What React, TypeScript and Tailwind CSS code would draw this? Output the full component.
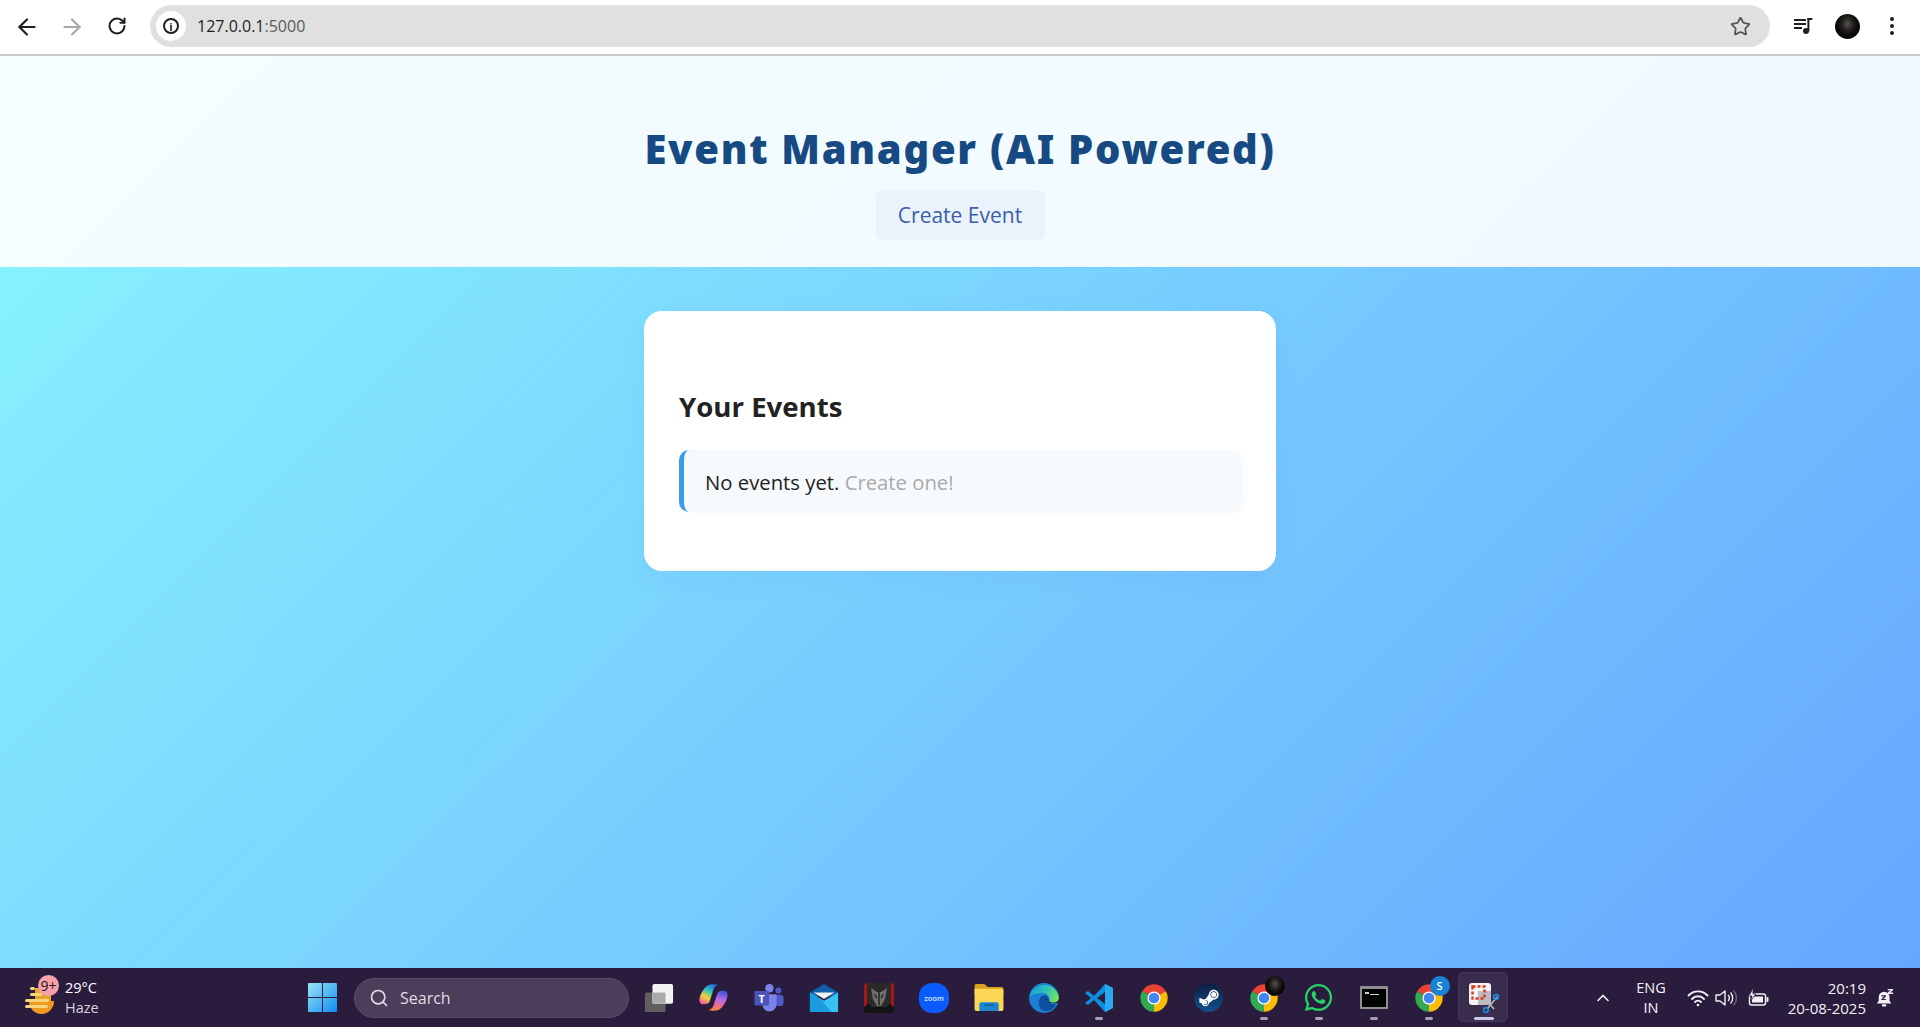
import React from 'react';
import { ArrowLeft, ArrowRight, RotateCw, Star, ChevronUp, Search } from 'lucide-react';
import { FaWhatsapp, FaSteamSymbol } from 'react-icons/fa';

const ChromeIcon: React.FC = () => (
  <svg viewBox="0 0 48 48" className="w-[30px] h-[30px]">
    <path d="M24 24 L5 13 A22 22 0 0 1 43 13 Z" fill="#ea4335" />
    <path d="M24 24 L43 13 A22 22 0 0 1 24 46 Z" fill="#fbbc04" />
    <path d="M24 24 L24 46 A22 22 0 0 1 5 13 Z" fill="#34a853" />
    <circle cx="24" cy="24" r="10.5" fill="#fff" />
    <circle cx="24" cy="24" r="8.5" fill="#4285f4" />
  </svg>
);

const TaskView = () => (
  <svg viewBox="0 0 32 32" className="w-[30px] h-[30px]">
    <rect x="1" y="10" width="22" height="21" rx="2" fill="#5f5f5f" />
    <rect x="9" y="1" width="22" height="21" rx="2" fill="#f2f2f2" />
    <rect x="9" y="10" width="14" height="12" rx="1" fill="#ababab" />
  </svg>
);

const Copilot = () => (
  <svg viewBox="0 0 30 28" className="w-[29px] h-[27px]">
    <defs>
      <linearGradient id="cpA" x1="0.7" y1="0" x2="0.2" y2="1">
        <stop offset="0" stopColor="#1f6fe0" />
        <stop offset="0.35" stopColor="#2fc4b8" />
        <stop offset="0.65" stopColor="#f3d23a" />
        <stop offset="1" stopColor="#ef5aa0" />
      </linearGradient>
      <linearGradient id="cpB" x1="0.6" y1="0" x2="0.4" y2="1">
        <stop offset="0" stopColor="#3f50d8" />
        <stop offset="0.4" stopColor="#b46be8" />
        <stop offset="0.75" stopColor="#f06a8c" />
        <stop offset="1" stopColor="#f58a2e" />
      </linearGradient>
    </defs>
    <path d="M9 1.5 C11 0 17 0 20 1 C16 2 15 5 14 9 L11 18 C10 21 7 21 4 21 C1 21 0 18 0.5 15 C1.5 10 5 4 9 1.5Z" fill="url(#cpA)" />
    <path d="M21 26.5 C19 28 13 28 10 27 C14 26 15 23 16 19 L19 10 C20 7 23 7 26 7 C29 7 30 10 29.5 13 C28.5 18 25 24 21 26.5Z" fill="url(#cpB)" />
  </svg>
);

const Teams = () => (
  <svg viewBox="0 0 32 32" className="w-[30px] h-[30px]">
    <circle cx="26" cy="8" r="3.2" fill="#5059c9" />
    <rect x="22" y="12.5" width="9.5" height="12" rx="3.5" fill="#5059c9" />
    <circle cx="16.5" cy="5.5" r="4.5" fill="#7b83eb" />
    <path d="M9 12 H24 V23 A7.5 7.5 0 0 1 9 23 Z" fill="#7b83eb" />
    <rect x="0.5" y="8.5" width="15.5" height="15.5" rx="1.5" fill="#4b53bc" />
    <text x="8.2" y="21" textAnchor="middle" fontSize="11.5" fontWeight="700" fontFamily="'Open Sans',sans-serif" fill="#fff">T</text>
  </svg>
);

const Mail = () => (
  <svg viewBox="0 0 32 32" className="w-[30px] h-[30px]">
    <path d="M1 10 L16 1 L31 10 V14 H1Z" fill="#0f5fa8" />
    <path d="M5 10 H27 L16 17Z" fill="#f1f1f1" />
    <path d="M1 10 L16 19 L31 10 V31 H1Z" fill="#36c2f3" />
    <path d="M1 10 L13 18 L24 31 H1Z" fill="#1a9be0" />
  </svg>
);

const Predator = () => (
  <svg viewBox="0 0 30 30" className="w-[30px] h-[30px]">
    <rect width="30" height="30" rx="3" fill="#141414" />
    <path d="M0 3 A3 3 0 0 1 3 0 V22 L0 24Z M30 3 A3 3 0 0 0 27 0 V22 L30 24Z" fill="#a81616" />
    <path d="M3 0 H27 V20 L22 24 H8 L3 20Z" fill="#2a2a2a" />
    <path d="M7 5 L13 9 H17 L23 5 L21 16 L17 23 H13 L9 16Z" fill="#6f6f6f" />
    <path d="M14 9 H16 V22 H14Z M10 10 L13 13 V16 L11 14Z M20 10 L17 13 V16 L19 14Z" fill="#343434" />
  </svg>
);

const ZoomIcon = () => (
  <svg viewBox="0 0 30 30" className="w-[30px] h-[30px]">
    <rect width="30" height="30" rx="13" fill="#0b5cff" />
    <text x="15" y="17.6" textAnchor="middle" fontSize="7.4" fontWeight="600" fontFamily="'Open Sans',sans-serif" fill="#dfe9ff">zoom</text>
  </svg>
);

const Folder = () => (
  <svg viewBox="0 0 30 28" className="w-[30px] h-[27px]">
    <path d="M0 2 A2 2 0 0 1 2 0 H10 L14 3 H28 A2 2 0 0 1 30 5 V10 H0Z" fill="#d9a21b" />
    <path d="M0 5 H28 A2 2 0 0 1 30 7 V26 A2 2 0 0 1 28 28 H2 A2 2 0 0 1 0 26Z" fill="#fcd757" />
    <path d="M5 28 V21 A2 2 0 0 1 7 19 H23 A2 2 0 0 1 25 21 V28Z" fill="#1a86d0" />
    <rect x="10" y="21" width="10" height="1.6" fill="#0e5f9c" />
  </svg>
);

const Edge = () => (
  <svg viewBox="0 0 30 30" className="w-[30px] h-[30px]">
    <defs>
      <linearGradient id="edgeA" x1="0" y1="0.3" x2="1" y2="0.6">
        <stop offset="0" stopColor="#1a9fdc" />
        <stop offset="0.55" stopColor="#2fc7b0" />
        <stop offset="1" stopColor="#7be35c" />
      </linearGradient>
    </defs>
    <circle cx="15" cy="15" r="15" fill="#1b7fd4" />
    <path d="M0.6 13 A15 15 0 0 1 30 15 C30 20 25 21 20 20 C23 14 17 9 11 10 C6 11 2 12 0.6 13Z" fill="url(#edgeA)" />
    <path d="M10 19 C10 14 15 11 18 13 C20 15 20 18 20 20 L27 21 C24 28 16 30 12 26 C10 24 10 21 10 19Z" fill="#0d4f9c" />
    <path d="M15 17 C17 15 19 17 20 20 L30 20 L30 15 C29 20 25 20 21 19 C19 18 17 16 15 17Z" fill="#2a1c3c" />
  </svg>
);

const VsCode = () => (
  <svg viewBox="0 0 30 30" className="w-[30px] h-[30px]">
    <path d="M21 1 L10 13 L4 8 L1 10 L7 15 L1 20 L4 22 L10 17 L21 29 L29 25 V5Z M21 9 V21 L13 15Z" fill="#0f8fe0" />
    <path d="M21 1 L29 5 V25 L21 29Z" fill="#2aa8f2" />
  </svg>
);

const Steam = () => (
  <div className="w-[29px] h-[29px] rounded-full bg-[linear-gradient(180deg,#0d1d3f,#10508f)] flex items-center justify-center">
    <FaSteamSymbol className="text-white w-[22px] h-[22px]" />
  </div>
);

const Terminal = () => (
  <div className="w-[28px] h-[23px] bg-black border-2 border-[#8f8f8f] border-t-[3px] rounded-[1px] relative">
    <span className="absolute left-[3px] top-[3px] w-[4px] h-[2px] bg-[#cfcfcf]" />
    <span className="absolute left-[8px] top-[5px] w-[9px] h-[1px] bg-[#cfcfcf]" />
  </div>
);

const Snip = () => (
  <svg viewBox="0 0 32 32" className="w-[32px] h-[32px]">
    <rect x="1" y="1" width="22" height="22" rx="3" fill="#f4f4f4" />
    <rect x="10" y="9" width="13" height="14" fill="#bcbcc4" />
    <rect x="4.5" y="4.5" width="12" height="12" fill="none" stroke="#d8371f" strokeWidth="2.4" strokeDasharray="3 2" />
    <path d="M16 16 L26 27 M29 15 L19 27" stroke="#b9b9b9" strokeWidth="1.6" />
    <circle cx="28" cy="15" r="2.4" fill="none" stroke="#1b8be0" strokeWidth="1.6" />
    <circle cx="18" cy="28" r="2.4" fill="none" stroke="#1b8be0" strokeWidth="1.6" />
  </svg>
);

const Slot: React.FC<{ dot?: boolean; active?: boolean; children: React.ReactNode }> = ({ dot, active, children }) => (
  <div className="relative w-[55px] h-full flex items-center justify-center">
    {active && <span className="absolute left-[2px] right-[3px] top-[4px] bottom-[5px] rounded-[5px] bg-[#3a2c4d] border border-[#43365a]" />}
    <span className="relative flex items-center justify-center">{children}</span>
    {dot && <span className="absolute top-[49px] left-1/2 -translate-x-1/2 w-[8px] h-[3px] rounded-full bg-[#a79fb0]" />}
    {active && <span className="absolute top-[49px] left-1/2 -translate-x-1/2 w-[20px] h-[3px] rounded-full bg-[#c9c6ee]" />}
  </div>
);

const Avatar: React.FC<{ size: string }> = ({ size }) => (
  <div className={`${size} rounded-full bg-[radial-gradient(ellipse_at_50%_40%,#5a5450_0%,#2a2826_26%,#0a0a0a_55%,#040404_100%)]`} />
);

export default function App() {
  return (
    <div className="h-screen flex flex-col overflow-hidden font-['Open_Sans',sans-serif]">
      {/* browser toolbar */}
      <div className="h-[56px] shrink-0 bg-white border-b-2 border-[#c8c8c8] flex items-start">
        <div className="w-[150px] h-[54px] flex items-center pl-[14px] gap-[19px]">
          <ArrowLeft className="w-[26px] h-[26px] text-[#1f1f1f]" strokeWidth={2} />
          <ArrowRight className="w-[26px] h-[26px] text-[#a8a8a8]" strokeWidth={2} />
          <RotateCw className="w-[20px] h-[20px] text-[#1f1f1f] ml-[3px] -mt-[3px]" strokeWidth={2.4} />
        </div>
        <div className="mt-[5px] w-[1620px] h-[42px] rounded-full bg-[#e0e0e0] flex items-center pl-[6px] pr-[14px]">
          <div className="w-[30px] h-[30px] rounded-full bg-white flex items-center justify-center">
            <div className="w-[16px] h-[16px] rounded-full border-2 border-[#1f1f1f] flex items-center justify-center text-[11px] font-bold leading-none text-[#1f1f1f]">i</div>
          </div>
          <span className="ml-[11px] text-[16px] text-[#1f1f1f]">127.0.0.1<span className="text-[#5b5b5b]">:5000</span></span>
          <Star className="ml-auto mr-[5px] w-[21px] h-[21px] text-[#555]" strokeWidth={2} />
        </div>
        <div className="flex-1 h-[52px] flex items-center pl-[24px]">
          <svg viewBox="0 0 20 18" className="w-[20px] h-[18px]" fill="#1f1f1f">
            <rect x="0" y="2" width="12" height="2" />
            <rect x="0" y="6" width="12" height="2" />
            <rect x="0" y="10" width="8" height="2" />
            <circle cx="12" cy="14" r="3" />
            <rect x="13.4" y="1" width="2" height="13" />
            <rect x="13.4" y="1" width="5" height="2" />
          </svg>
          <div className="ml-[21px]"><Avatar size="w-[25px] h-[25px]" /></div>
          <div className="ml-[30px] flex flex-col gap-[3px]">
            <span className="w-[4px] h-[4px] rounded-full bg-[#1f1f1f]" />
            <span className="w-[4px] h-[4px] rounded-full bg-[#1f1f1f]" />
            <span className="w-[4px] h-[4px] rounded-full bg-[#1f1f1f]" />
          </div>
        </div>
      </div>

      {/* page */}
      <div className="flex-1 min-h-0 bg-[linear-gradient(135deg,#89f7fe_0%,#66a6ff_100%)]">
        <header className="h-[211px] bg-white/90 flex flex-col items-center pt-[64px]">
          <h1 className="text-[40px] leading-[58px] font-black tracking-[1.7px] text-[#174a82] font-['Noto_Sans',sans-serif]">Event Manager (AI Powered)</h1>
          <a className="mt-[12px] w-[169px] h-[50px] rounded-[6px] bg-[#eaf3fb] flex items-center justify-center pt-[1px] text-[21px] text-[#3b5fa8]">Create Event</a>
        </header>
        <main className="mt-[44px] mx-auto w-[632px] h-[260px] rounded-[18px] bg-white shadow-[0_8px_32px_rgba(31,38,135,0.03)] pl-[35px] pr-[33px] pt-[77px]">
          <h2 className="text-[27.6px] leading-[36px] font-bold text-[#222]">Your Events</h2>
          <div className="mt-[26px] h-[62px] rounded-[10px] border-l-[5px] border-[#3b9bea] bg-[#f7fafd] shadow-[0_2px_8px_rgba(0,0,0,0.02)] flex items-center pl-[21px] pt-[2px] text-[20.3px] text-[#222]">
            <span>No events yet. <span className="text-[#aaa]">Create one!</span></span>
          </div>
        </main>
      </div>

      {/* windows taskbar */}
      <div className="h-[59px] shrink-0 bg-[#2a1c3c] flex items-center text-white">
        <div className="w-[308px] flex items-center h-full pl-[25px] relative">
          <svg viewBox="0 0 30 32" className="w-[30px] h-[32px] mt-[6px]">
            <path d="M4 16 H29 A12.5 13 0 0 1 4 16Z" fill="#f29a1f" />
            <rect x="10" y="3" width="16" height="13" fill="#e8a52e" />
            <rect x="5" y="2" width="5" height="3" rx="1.5" fill="#f5d67a" />
            <rect x="5" y="8" width="12" height="3" rx="1.5" fill="#f5d67a" />
            <rect x="0" y="14" width="24" height="3" rx="1.5" fill="#f5d67a" />
            <rect x="0" y="20" width="23" height="3" rx="1.5" fill="#f5d67a" />
          </svg>
          <span className="absolute left-[38px] top-[7px] w-[21px] h-[21px] rounded-full bg-[#f8a0aa] text-[#1a1a1a] text-[14px] leading-[21px] text-center">9+</span>
          <div className="ml-[10px] text-[14.5px] leading-[20px]">
            <div>29°C</div>
            <div className="text-[#d8d3de]">Haze</div>
          </div>
        </div>
        <svg viewBox="0 0 29 29" className="w-[29px] h-[29px] shrink-0">
          <defs>
            <linearGradient id="winA" x1="0" y1="0" x2="1" y2="1">
              <stop offset="0" stopColor="#9be4f5" />
              <stop offset="1" stopColor="#0a8df0" />
            </linearGradient>
          </defs>
          <path d="M1 0 H14 V14 H0 V1 A1 1 0 0 1 1 0Z M15 0 H28 A1 1 0 0 1 29 1 V14 H15Z M0 15 H14 V29 H1 A1 1 0 0 1 0 28Z M15 15 H29 V28 A1 1 0 0 1 28 29 H15Z" fill="url(#winA)" />
        </svg>
        <div className="ml-[17px] w-[275px] h-[40px] shrink-0 rounded-full bg-[#4c3e5a] border border-[#5b4d68] flex items-center pl-[14px] text-[#e0dce4]">
          <Search className="w-[20px] h-[20px]" strokeWidth={2} />
          <span className="ml-[11px] text-[16px]">Search</span>
        </div>
        <div className="ml-[2px] flex items-center h-full">
          <Slot><TaskView /></Slot>
          <Slot><Copilot /></Slot>
          <Slot><Teams /></Slot>
          <Slot><Mail /></Slot>
          <Slot><Predator /></Slot>
          <Slot><ZoomIcon /></Slot>
          <Slot><Folder /></Slot>
          <Slot><Edge /></Slot>
          <Slot dot><VsCode /></Slot>
          <Slot><ChromeIcon /></Slot>
          <Slot><Steam /></Slot>
          <Slot dot>
            <ChromeIcon />
            <span className="absolute -right-[6px] -top-[7px]"><Avatar size="w-[20px] h-[20px]" /></span>
          </Slot>
          <Slot dot><FaWhatsapp className="w-[31px] h-[31px] text-[#25d366]" /></Slot>
          <Slot dot><Terminal /></Slot>
          <Slot dot>
            <ChromeIcon />
            <span className="absolute -right-[6px] -top-[7px] w-[20px] h-[20px] rounded-full bg-[#1783d4] text-[11px] leading-[20px] text-center font-semibold">S</span>
          </Slot>
          <Slot active><Snip /></Slot>
        </div>
        <div className="flex-1 h-full flex items-center pl-[82px] text-[#f3f0f6]">
          <ChevronUp className="w-[20px] h-[20px]" strokeWidth={2} />
          <div className="ml-[18px] w-[40px] text-center text-[14.5px] leading-[20px]">
            <div>ENG</div>
            <div>IN</div>
          </div>
          <svg viewBox="0 0 22 18" className="ml-[16px] w-[22px] h-[18px]" fill="none" stroke="#f3f0f6" strokeWidth="1.9" strokeLinecap="round">
            <path d="M1.5 6.5 A13 13 0 0 1 20.5 6.5" />
            <path d="M5 10 A8 8 0 0 1 17 10" />
            <path d="M8 13 A4 4 0 0 1 14 13" />
            <circle cx="11" cy="16" r="1.3" fill="#f3f0f6" stroke="none" />
          </svg>
          <svg viewBox="0 0 22 20" className="ml-[6px] w-[22px] h-[20px]" fill="none" stroke="#f3f0f6" strokeWidth="1.4">
            <path d="M1 7 H5 L10 3 V17 L5 13 H1Z" strokeLinejoin="round" />
            <path d="M13 7 A4 4 0 0 1 13 13" />
            <path d="M15.5 4.5 A8 8 0 0 1 15.5 15.5" />
            <path d="M18.5 2.5 A11 11 0 0 1 18.5 17.5" stroke="#6a5f76" />
          </svg>
          <svg viewBox="0 0 22 20" className="ml-[10px] w-[22px] h-[20px]">
            <rect x="2.5" y="6" width="16" height="11" rx="2" fill="none" stroke="#f3f0f6" strokeWidth="1.5" />
            <rect x="5" y="8.5" width="11" height="6" fill="#f3f0f6" />
            <rect x="19.5" y="9" width="2" height="5" rx="1" fill="#f3f0f6" />
            <path d="M6 0 L2 8 H5 L3.5 13 L9 6 H6Z" fill="#f3f0f6" stroke="#2a1c3c" strokeWidth="0.8" />
          </svg>
          <div className="ml-[9px] w-[88px] text-right text-[15px] leading-[20px] whitespace-nowrap">
            <div>20:19</div>
            <div>20-08-2025</div>
          </div>
          <svg viewBox="0 0 20 22" className="ml-[10px] w-[18px] h-[20px]" fill="#f3f0f6">
            <path d="M9 4 A6 6 0 0 1 15 10 V14 L17 17 H1 L3 14 V10 A6 6 0 0 1 9 4Z" />
            <rect x="6.5" y="18" width="5" height="2.5" rx="1.2" />
            <path d="M13 1 H19 V2.5 L15.5 5 H19 V6.5 H13 V5 L16.5 2.5 H13Z" />
            <path d="M6 8 H11 V9.2 L8 12 H11 V13.2 H6 V12 L9 9.2 H6Z" fill="#2a1c3c" />
          </svg>
        </div>
      </div>
    </div>
  );
}
